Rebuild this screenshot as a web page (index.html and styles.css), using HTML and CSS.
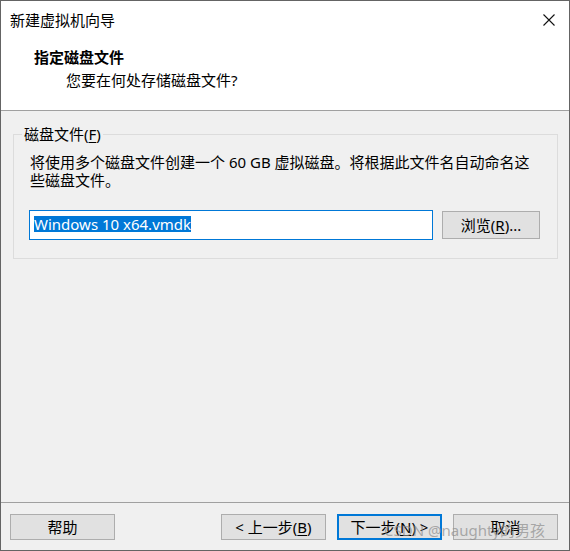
FILE: index.html
```html
<!DOCTYPE html>
<html lang="zh-CN">
<head>
<meta charset="utf-8">
<title>新建虚拟机向导</title>
<link rel="stylesheet" href="styles.css">
</head>
<body>
<div class="window">
  <div class="top">
    <div class="titlebar">
      <span class="title">新建虚拟机向导</span>
      <svg class="close" width="12" height="12" viewBox="0 0 12 12"><path d="M0.5 0.5 L11.5 11.5 M11.5 0.5 L0.5 11.5" stroke="#111" stroke-width="1.1" fill="none"/></svg>
    </div>
    <div class="header">
      <div class="h-title">指定磁盘文件</div>
      <div class="h-sub">您要在何处存储磁盘文件?</div>
    </div>
  </div>
  <div class="body">
    <div class="group">
      <span class="legend">磁盘文件(<u>F</u>)</span>
      <p class="desc">将使用多个磁盘文件创建一个 60 GB 虚拟磁盘。将根据此文件名自动命名这些磁盘文件。</p>
      <div class="file-row">
        <div class="input"><span class="sel">Windows 10 x64.vmdk</span></div>
        <div class="btn browse">浏览(<u>R</u>)...</div>
      </div>
    </div>
  </div>
  <div class="footer">
    <div class="btn">帮助</div>
    <div class="spacer"></div>
    <div class="btn">&lt; 上一步(<u>B</u>)</div>
    <div class="btn default">下一步(<u>N</u>) &gt;</div>
    <div class="btn">取消</div>
    <div class="watermark">CSDN @naughty的男孩</div>
  </div>
</div>
</body>
</html>
```

FILE: styles.css
```css
* { box-sizing: border-box; }
html, body { margin: 0; padding: 0; }
body {
  width: 570px;
  height: 551px;
  font-family: "Noto Sans", "Noto Sans CJK SC", sans-serif;
  font-size: 15px;
  color: #000;
  background: #fff;
}
.window {
  width: 570px;
  height: 551px;
  border: 1px solid #646464;
  display: flex;
  flex-direction: column;
  background: #f0f0f0;
}
.top {
  height: 110px;
  background: #fff;
  border-bottom: 1px solid #a0a0a0;
  flex: none;
}
.titlebar {
  height: 38px;
  display: flex;
  align-items: center;
  justify-content: space-between;
  padding-left: 9px;
  padding-right: 14px;
}
.title { line-height: 38px; }
.close { display: block; }
.header { padding-top: 8px; }
.h-title {
  padding-left: 33px;
  font-weight: bold;
  line-height: 20px;
  font-family: "Noto Sans CJK SC", sans-serif;
}
.h-sub {
  padding-left: 65px;
  margin-top: 3px;
  line-height: 20px;
}
.body {
  flex: none;
  height: 391px;
  padding: 23px 11px 0 12px;
}
.group {
  position: relative;
  height: 125px;
  border: 1px solid #dcdcdc;
  padding: 18px 0 0 16px;
}
.legend {
  position: absolute;
  left: 8px;
  top: -10px;
  line-height: 18px;
  padding: 0 2px;
  background: #f0f0f0;
}
u { text-decoration: underline; text-underline-offset: 2px; }
.desc {
  margin: 0;
  line-height: 18px;
  max-width: 506px;
}
.file-row {
  display: flex;
  align-items: flex-start;
  margin-top: 21px;
  margin-left: -1px;
  gap: 9px;
}
.input {
  flex: none;
  width: 404px;
  height: 30px;
  border: 1px solid #0078d7;
  background: #fff;
  padding: 3px 0 0 4px;
}
.sel {
  display: inline-block;
  background: #0078d7;
  color: #fff;
  height: 16px;
  line-height: 16px;
}
.btn {
  width: 105px;
  height: 26px;
  border: 1px solid #adadad;
  background: #e1e1e1;
  display: flex;
  align-items: center;
  justify-content: center;
  line-height: 18px;
  flex: none;
}
.browse {
  width: 98px;
  height: 28px;
  margin-top: 1px;
}
.btn.default { border: 2px solid #0078d7; }
.footer {
  position: relative;
  flex: 1;
  border-top: 1px solid #a0a0a0;
  display: flex;
  align-items: flex-start;
  gap: 11px;
  padding: 11px 11px 0 9px;
}
.spacer { flex: 1; }
.watermark {
  position: absolute;
  left: 383px;
  top: 18px;
  font-size: 15px;
  line-height: 18px;
  color: rgba(140, 140, 140, 0.7);
  white-space: nowrap;
  pointer-events: none;
}
```
